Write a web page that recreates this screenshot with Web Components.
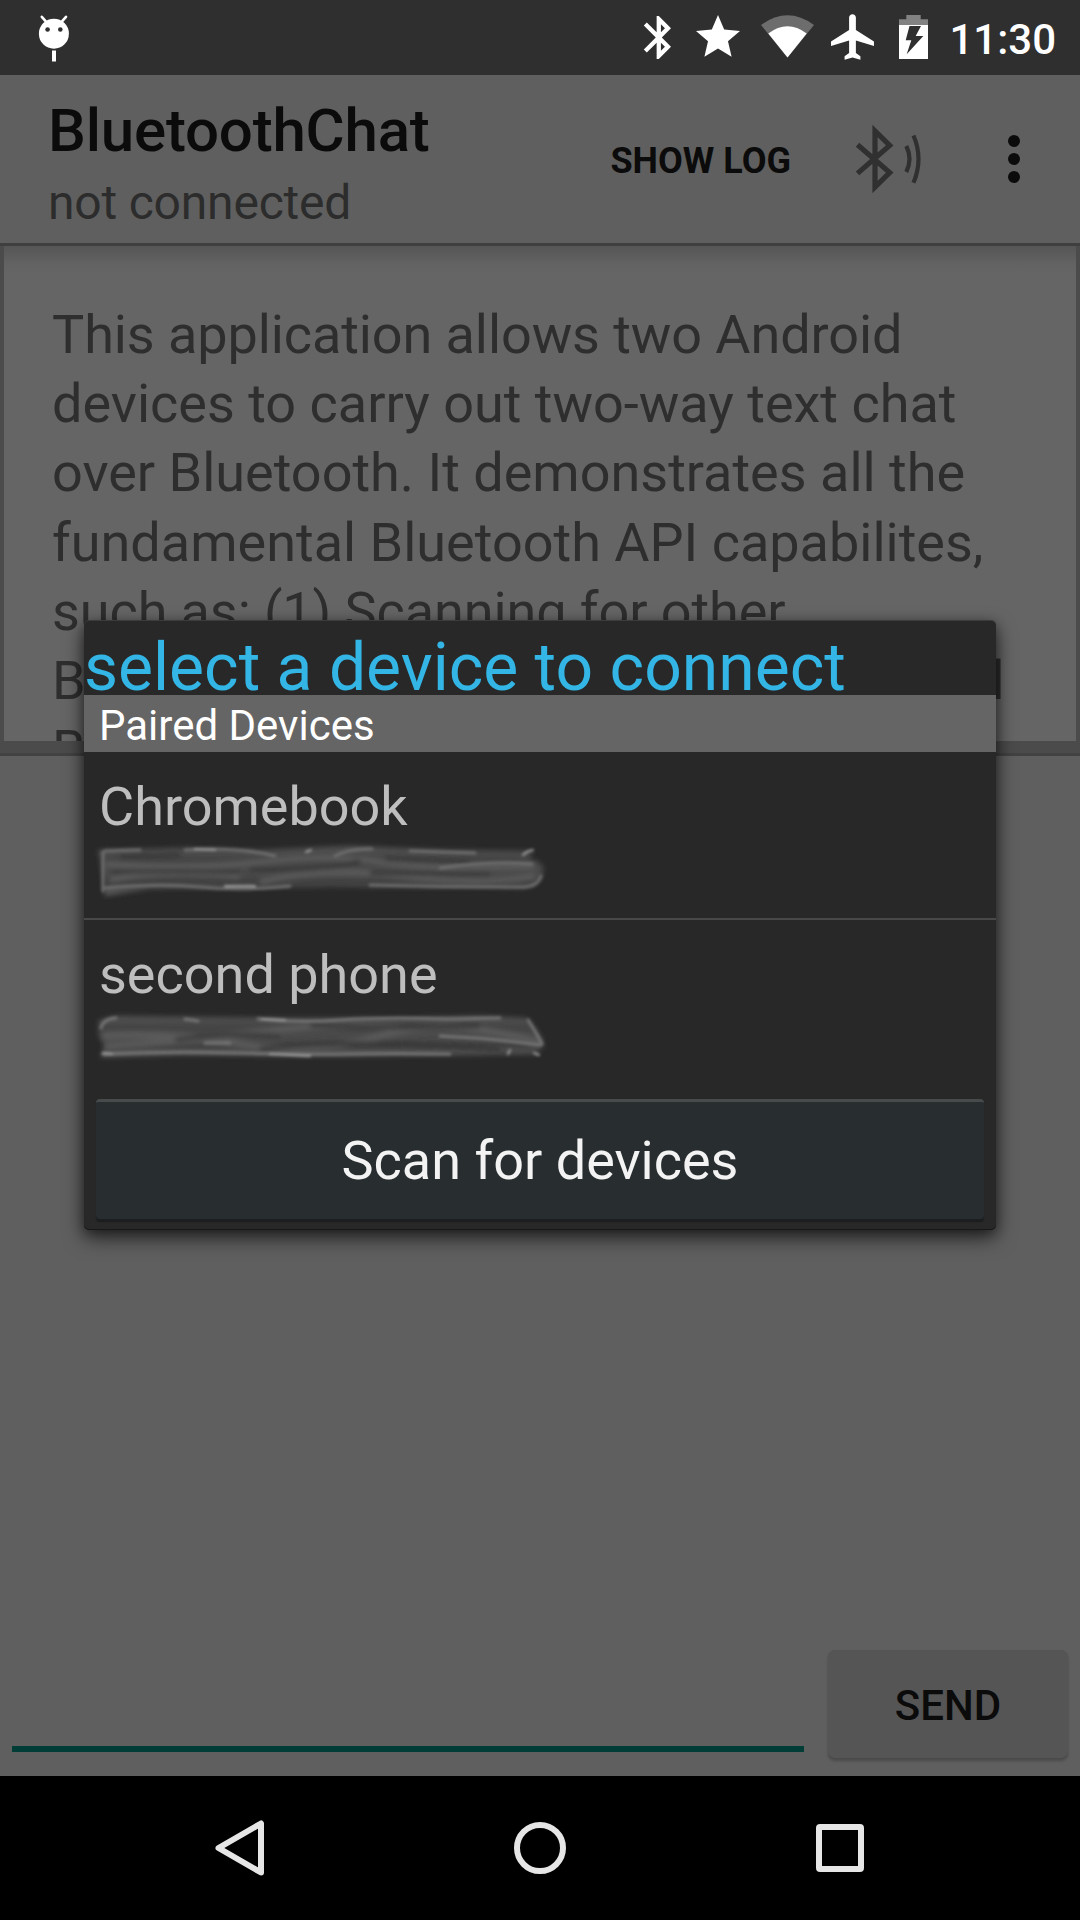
<!DOCTYPE html>
<html lang="en">
<head>
<meta charset="utf-8">
<title>BluetoothChat</title>
<style>
html,body{margin:0;padding:0}
body{width:1080px;height:1920px;overflow:hidden;background:#000;font-family:Roboto,sans-serif}
</style>
</head>
<body>
<chat-app></chat-app>
<script>
const define = (name, html) => customElements.define(name, class extends HTMLElement {
  constructor() {
    super();
    this.attachShadow({mode: 'open'}).innerHTML = html;
  }
});

define('status-bar', `
<style>
:host{display:flex;height:75px;background:#2f2f2f;color:#fff;box-sizing:border-box;padding:0 24px 0 36px}
svg{display:block;flex:none;height:75px}
.gap{flex:1}
.clock{font-size:42px;font-weight:500;line-height:79px;margin-left:19px;white-space:nowrap}
</style>
<svg width="36" viewBox="36 0 36 75"><path d="M41.8 16.8l4 4.6M66 16.8l-4 4.6" stroke="#fff" stroke-width="2.6" stroke-linecap="round"/><circle cx="53.9" cy="33.7" r="15" fill="#fff"/><circle cx="47.6" cy="29.5" r="2.3" fill="#2f2f2f"/><circle cx="60.3" cy="29.5" r="2.3" fill="#2f2f2f"/><path d="M52 50.5h4v11h-4z" fill="#fff"/></svg>
<div class="gap"></div>
<svg width="54" viewBox="640 0 54 75"><path fill="#fff" transform="translate(633.1 11.8) scale(2.14)" d="M17.71 7.71L12 2h-1v7.59L6.41 5 5 6.41 10.59 12 5 17.59 6.41 19 11 14.41V22h1l5.71-5.71-4.3-4.29 4.3-4.29zM13 5.83l1.88 1.88L13 9.59V5.83zm1.88 10.46L13 18.17v-3.76l1.88 1.88z"/></svg>
<svg width="64" viewBox="694 0 64 75"><path fill="#fff" transform="translate(691.6 10.6) scale(2.2)" d="M12 17.27L18.18 21l-1.64-7.03L22 9.24l-7.19-.61L12 2 9.19 8.63 2 9.24l5.46 4.73L5.82 21z"/></svg>
<svg width="70" viewBox="758 0 70 75"><path fill="#6d6d6d" d="M787.5 57.5L761 25Q787.5 5.6 814 25Z"/><path fill="#fff" d="M787.5 57.5L768.3 33.5Q787.5 19 806.7 33.5Z"/></svg>
<svg width="68" viewBox="828 0 68 75"><path fill="#fff" transform="translate(826.5 9.6) scale(2.26 2.28)" d="M21 16v-2l-8-5V3.500c0-.83-.67-1.500-1.500-1.500S10 2.670 10 3.500V9l-8 5v2l8-2.500V19l-2 1.500V22l3.500-1 3.500 1v-1.500L13 19v-5.500l8 2.500z"/></svg>
<svg width="34" viewBox="896 0 34 75"><path fill="#828282" d="M906.300 15h14.400v4.300h7.300V25h-29v-5.700h7.300z"/><path fill="#fff" d="M899 25h29v34h-29z"/><path fill="#2f2f2f" d="M909.500 26H921l-5.300 10h7.600l-16.600 18.300 4.600-14h-5.600z"/></svg>
<span class="clock">11:30</span>`);

define('app-toolbar', `
<style>
:host{display:flex;height:168px;background:#5f5f5f;color:#0b0b0b;box-sizing:border-box;padding-left:48px}
.titles{flex:1;padding-top:21px}
.title{font-size:60px;font-weight:500;line-height:70px;letter-spacing:-.2px}
.sub{font-size:48px;line-height:56px;margin-top:9px;color:#2c2c2c;letter-spacing:-.2px}
.log{font-size:36px;font-weight:700;line-height:173px;margin-right:59px;white-space:nowrap}
svg{display:block;height:168px;flex:none}
</style>
<div class="titles"><div class="title"><slot name="title"></slot></div><div class="sub"><slot name="subtitle"></slot></div></div>
<div class="log"><slot name="action"></slot></div>
<svg width="230" viewBox="850 75 230 168"><g fill="none" stroke="#303030"><path stroke-width="5.200" d="M857.500 144.800L889.700 172.600 875 187V131L889.700 145.400 857.500 173.400"/><path stroke-width="4.200" d="M906.300 146Q912.700 159 906.300 172M913.500 135.500Q923.500 159 913.500 182.800"/></g><g fill="#0b0b0b"><circle cx="1014" cy="141" r="6"/><circle cx="1014" cy="159" r="6"/><circle cx="1014" cy="177" r="6"/></g></svg>`);

define('intro-card', `
<style>
:host{display:block;height:513px;box-sizing:border-box;background:#4b4b4b;padding:3px 4px 15px;box-shadow:inset 0 3px #3f3f3f,inset 0 -3px #424242}
.in{height:495px;overflow:hidden;background:linear-gradient(#565656,#5b5b5b 8px,#626262 17px,#656565 28px);box-sizing:border-box;padding:54px 0 0 48px;font-size:54px;line-height:69.200px;color:#2e2e2e;white-space:nowrap}
::slotted(.tight){letter-spacing:-.09px}
</style>
<div class="in"><slot></slot></div>`);

define('message-bar', `
<style>
:host{display:flex;height:126px;padding:0 12px;gap:24px;box-sizing:border-box}
.field{flex:1;height:96px;border-bottom:6px solid #003d36}
button{width:240px;height:108px;border:0;border-radius:7px;background:#555;color:#0b0b0b;font:500 42px/108px Roboto,sans-serif;padding:2px 0 0;box-shadow:0 3px 3px rgba(0,0,0,.22),0 0 1px rgba(0,0,0,.1)}
</style>
<div class="field"></div><button><slot></slot></button>`);

define('nav-bar', `
<style>
:host{display:flex;height:144px;background:#000;justify-content:center}
svg{display:block}
</style>
<svg width="1080" height="144" viewBox="0 1776 1080 144" fill="none" stroke="#e6e6e6" stroke-width="6" stroke-linejoin="round"><path d="M261 1823.500V1872.500L218.500 1848Z"/><circle cx="540" cy="1848" r="23"/><rect x="819" y="1827" width="42" height="42" rx="1"/></svg>`);

define('device-row', `
<style>
:host{display:block;padding:19px 0 0 15px;box-sizing:border-box;height:var(--h,166px)}
.name{font-size:54px;line-height:72px;color:#bebebe;height:71px}
::slotted(svg){display:block;margin-left:-9px}
</style>
<div class="name"><slot></slot></div><slot name="address"></slot>`);

define('device-dialog', `
<style>
:host{position:absolute;left:84px;top:621px;width:912px;height:609px;box-sizing:border-box;background:#282828;border-radius:5px;display:flex;flex-direction:column;box-shadow:inset 0 -1px #181818,0 -1px 0 #3c3c3c,0 8px 20px rgba(0,0,0,.6),0 2px 12px rgba(0,0,0,.35)}
.title{height:74px;box-sizing:border-box;padding-top:8px;font-size:66px;line-height:77px;color:#33b5e5;white-space:nowrap}
.head{height:57px;line-height:61px;font-size:42px;color:#fff;background:#656565;padding-left:15px}
.rule{height:2px;background:#484848}
button{margin:0 12px;height:122px;box-sizing:border-box;border:0;border-top:3px solid #474b4c;border-radius:4px;background:#282d30;box-shadow:inset 0 -2px #1c1f21,0 1px 1px #1b1b1b;color:#f3f3f3;font:54px/117px Roboto,sans-serif;padding:0 0 4px}
svg{overflow:visible}
</style>
<div class="title">select a device to connect</div>
<div class="head">Paired Devices</div>
<device-row>Chromebook
<svg slot="address" width="460" height="56" viewBox="90 842 460 56" fill="none">
<defs><linearGradient id="g" x1="0" y1="0" x2="0" y2="1"><stop offset="0" stop-color="#555"/><stop offset=".3" stop-color="#414141"/><stop offset=".5" stop-color="#4c4c4c"/><stop offset=".75" stop-color="#3f3f3f"/><stop offset="1" stop-color="#606060"/></linearGradient><filter id="a" x="-5%" y="-40%" width="110%" height="180%"><feGaussianBlur stdDeviation="2.400"/></filter><filter id="b" x="-5%" y="-60%" width="110%" height="220%"><feGaussianBlur stdDeviation="1.500"/></filter></defs>
<path filter="url(#a)" fill="url(#g)" d="M98 850L185 848 260 850 350 846 450 850 532 851 530 859Q545 861 543 872 541 887 525 888L330 887 150 889 105 896Q102 870 98 851Z"/>
<g filter="url(#a)"><path stroke="#5a5a5a" stroke-width="6" d="M105 864Q190 870 260 862T380 862 535 866M110 880Q160 868 240 876M260 882Q320 866 400 876T535 876"/><path stroke="#363636" stroke-width="4" d="M112 872Q170 870 240 872M120 857L180 855M250 869Q320 872 360 861M370 873L490 874M385 859L470 863"/></g>
<g filter="url(#b)" stroke-width="3" stroke-linecap="round"><path stroke="#6e6e6e" d="M103 852V891M105 851L140 850M185 850Q240 847 275 856M335 856Q350 848 372 849M410 851L475 853M106 888Q160 883 200 887T290 886M370 885Q450 887 525 887 538 886 541 876M440 868Q490 861 532 864"/><path stroke="#a0a0a0" stroke-width="2" d="M523 855Q527 851 533 850M225 886L255 886M195 849L215 850M306 852L311 850"/></g></svg>
</device-row>
<div class="rule"></div>
<device-row style="--h:179px">second phone
<svg slot="address" width="460" height="56" viewBox="90 1010 460 56" fill="none">
<defs><linearGradient id="g" x1="0" y1="0" x2="0" y2="1"><stop offset="0" stop-color="#5a5a5a"/><stop offset=".3" stop-color="#444"/><stop offset=".5" stop-color="#4e4e4e"/><stop offset=".75" stop-color="#3f3f3f"/><stop offset="1" stop-color="#606060"/></linearGradient><filter id="a" x="-5%" y="-40%" width="110%" height="180%"><feGaussianBlur stdDeviation="2.400"/></filter><filter id="b" x="-5%" y="-60%" width="110%" height="220%"><feGaussianBlur stdDeviation="1.500"/></filter></defs>
<path filter="url(#a)" fill="url(#g)" d="M99 1020L115 1016 280 1018 400 1018 480 1016 526 1018Q538 1026 545 1046L535 1054 460 1055 330 1056 180 1055 101 1057 104 1045Q95 1035 99 1020Z"/>
<g filter="url(#a)"><path stroke="#5a5a5a" stroke-width="7" d="M103 1036Q170 1032 240 1044T380 1036 540 1043M105 1046Q180 1042 260 1032T400 1028"/><path stroke="#363636" stroke-width="4" d="M175 1040Q230 1032 280 1036M260 1049Q330 1042 400 1044T500 1050M310 1025Q400 1029 480 1026"/></g>
<g filter="url(#b)" stroke-width="3" stroke-linecap="round"><path stroke="#747474" d="M101 1028Q103 1019 116 1018M185 1019L198 1021M258 1019Q300 1023 340 1020T450 1019L500 1018M528 1020Q536 1032 542 1044M103 1054Q170 1051 240 1053T350 1054 450 1054M205 1043L230 1043M440 1036Q490 1038 540 1045"/><path stroke="#a0a0a0" stroke-width="2" d="M262 1019L285 1020M103 1053L112 1054M270 1054L310 1056M508 1054L510 1050M534 1053L539 1055"/></g></svg>
</device-row>
<button>Scan for devices</button>`);

define('chat-app', `
<style>
:host{display:flex;flex-direction:column;position:relative;width:1080px;height:1920px;background:#5f5f5f}
.space{flex:1}
</style>
<status-bar></status-bar>
<app-toolbar><span slot="title">BluetoothChat</span><span slot="subtitle">not connected</span><span slot="action">SHOW LOG</span></app-toolbar>
<intro-card><span class="tight">This application allows two Android</span><br>devices to carry out two-way text chat<br>over Bluetooth. It demonstrates all the<br>fundamental Bluetooth API capabilites,<br><span class="tight">such as: (1) Scanning for other</span><br>Bluetooth devices (2) Querying the local<br>Bluetooth adapter for paired Bluetooth</intro-card>
<div class="space"></div>
<message-bar>SEND</message-bar>
<nav-bar></nav-bar>
<device-dialog></device-dialog>`);
</script>
</body>
</html>
